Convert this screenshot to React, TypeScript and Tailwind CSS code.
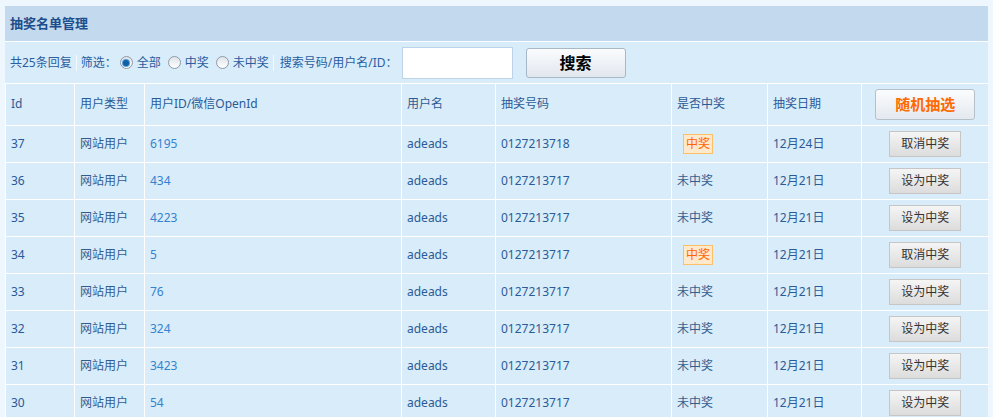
import React from "react";

type Row = {
  id: number;
  uid: string;
  code: string;
  won: boolean;
  date: string;
};

const rows: Row[] = [
  { id: 37, uid: "6195", code: "0127213718", won: true, date: "12月24日" },
  { id: 36, uid: "434", code: "0127213717", won: false, date: "12月21日" },
  { id: 35, uid: "4223", code: "0127213717", won: false, date: "12月21日" },
  { id: 34, uid: "5", code: "0127213717", won: true, date: "12月21日" },
  { id: 33, uid: "76", code: "0127213717", won: false, date: "12月21日" },
  { id: 32, uid: "324", code: "0127213717", won: false, date: "12月21日" },
  { id: 31, uid: "3423", code: "0127213717", won: false, date: "12月21日" },
  { id: 30, uid: "54", code: "0127213717", won: false, date: "12月21日" },
];

const font = { fontFamily: '"Noto Sans", "Noto Sans CJK SC", sans-serif' };

function Radio({ checked, label }: { checked?: boolean; label: string }) {
  return (
    <label className="flex items-center gap-[4px]">
      <span className="w-[13px] h-[13px] rounded-full border border-[#8d9aab] bg-gradient-to-b from-[#dfe3e8] to-white flex items-center justify-center">
        {checked && <span className="w-[6px] h-[6px] rounded-full bg-[#0f5fa6] ring-1 ring-[#5a9bd5]" />}
      </span>
      <span>{label}</span>
    </label>
  );
}

function Sep() {
  return <span className="w-px h-[16px] bg-[#f4f9fe] mx-[4px]" />;
}

export default function App() {
  return (
    <div className="w-[993px] h-[417px] bg-[#eef6fe] pl-[5px] pt-[6px] overflow-hidden" style={font}>
      <div className="w-[983px] bg-[#d9ecfa]">
        <div className="h-[36px] bg-[#c3d9ee] border-b border-white flex items-center pl-[5px] text-[13px] font-bold text-[#1c4d8c]">
          抽奖名单管理
        </div>
        <div className="h-[42px] border-b border-white flex items-center pl-[5px] text-[12px] text-[#2a5e9e]">
          <span>共25条回复</span>
          <Sep />
          <span>筛选：</span>
          <div className="flex items-center gap-[7px] ml-[3px]">
            <Radio checked label="全部" />
            <Radio label="中奖" />
            <Radio label="未中奖" />
          </div>
          <Sep />
          <span className="ml-[2px]">搜索号码/用户名/ID：</span>
          <input className="ml-[4px] w-[111px] h-[32px] bg-white border border-[#bcd3e8] outline-none" />
          <button className="ml-[13px] w-[100px] h-[30px] rounded-[3px] border border-[#a9b7c6] bg-gradient-to-b from-[#fbfcfe] to-[#e1e7ee] text-[16px] font-bold text-black">
            搜索
          </button>
        </div>
        <table className="w-[983px] table-fixed border-collapse text-[12px] text-[#2b5b96]">
          <colgroup>
            <col className="w-[69px]" />
            <col className="w-[70px]" />
            <col className="w-[257px]" />
            <col className="w-[94px]" />
            <col className="w-[176px]" />
            <col className="w-[96px]" />
            <col className="w-[94px]" />
            <col className="w-[127px]" />
          </colgroup>
          <thead>
            <tr className="h-[41px]">
              {["Id", "用户类型", "用户ID/微信OpenId", "用户名", "抽奖号码", "是否中奖", "抽奖日期"].map((h) => (
                <td key={h} className="border border-white border-t-0 px-[5px] font-normal text-left">
                  {h}
                </td>
              ))}
              <td className="border border-white border-t-0 border-r-0 text-center">
                <button className="w-[100px] h-[31px] rounded-[3px] border border-[#b5c0cb] bg-gradient-to-b from-[#fbfcfe] to-[#e4e9ef] text-[15px] font-bold text-[#ff6a00]">
                  随机抽选
                </button>
              </td>
            </tr>
          </thead>
          <tbody>
            {rows.map((r) => (
              <tr key={r.id} className="h-[37px]">
                <td className="border border-white px-[5px] text-[#28599b]">{r.id}</td>
                <td className="border border-white px-[5px] text-[#335c8e]">网站用户</td>
                <td className="border border-white px-[5px] text-[#3582cf]">{r.uid}</td>
                <td className="border border-white px-[5px]">adeads</td>
                <td className="border border-white px-[5px]">{r.code}</td>
                <td className="border border-white px-[5px] text-[#335f8f]">
                  {r.won ? (
                    <span className="ml-[6px] inline-block px-[2px] leading-[18px] bg-[#ffe9cc] border border-[#ffbf66] text-[#ff6600]">
                      中奖
                    </span>
                  ) : (
                    "未中奖"
                  )}
                </td>
                <td className="border border-white px-[5px]">{r.date}</td>
                <td className="border border-white border-r-0 text-center">
                  <button className="w-[72px] h-[26px] border border-[#c6c6c6] bg-gradient-to-b from-[#f5f5f5] to-[#dcdcdc] text-[12px] text-[#333]">
                    {r.won ? "取消中奖" : "设为中奖"}
                  </button>
                </td>
              </tr>
            ))}
          </tbody>
        </table>
      </div>
    </div>
  );
}
